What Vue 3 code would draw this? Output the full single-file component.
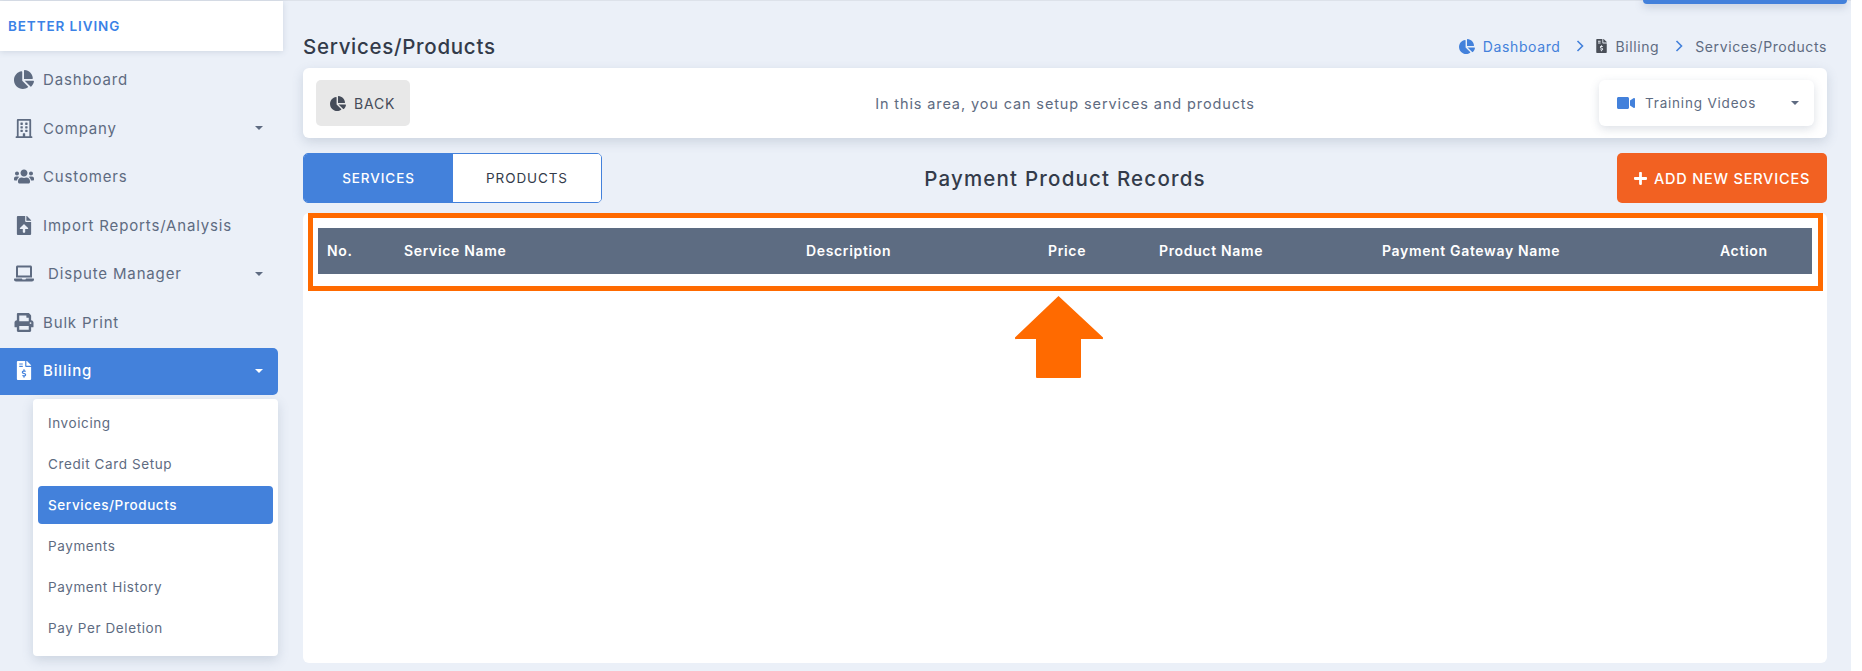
<template>
  <div class="page">
    <span class="top-btn"></span>

    <aside class="sidebar">
      <div class="logo">BETTER LIVING</div>
      <nav>
        <a
          v-for="item in nav"
          :key="item.label"
          class="nav-item"
          :class="{ active: item.active, wide: item.wide }"
        >
          <svg class="nav-icon" :viewBox="icons[item.icon].box" fill="currentColor">
            <path :d="icons[item.icon].d" />
          </svg>
          <span class="nav-label">{{ item.label }}</span>
          <i v-if="item.caret" class="caret"></i>
        </a>
      </nav>
      <ul class="submenu">
        <li v-for="s in billing" :key="s" :class="{ current: s === 'Services/Products' }">{{ s }}</li>
      </ul>
    </aside>

    <main class="main">
      <div class="head">
        <h1>Services/Products</h1>
        <div class="crumbs">
          <svg class="crumb-icon blue" :viewBox="icons.pie.box" fill="currentColor"><path :d="icons.pie.d" /></svg>
          <a>Dashboard</a>
          <svg class="chev" viewBox="0 0 8 12"><path d="M1.5 1l5 5-5 5" /></svg>
          <svg class="crumb-icon small" :viewBox="icons.invoice.box" fill="currentColor"><path :d="icons.invoice.d" /></svg>
          <span>Billing</span>
          <svg class="chev" viewBox="0 0 8 12"><path d="M1.5 1l5 5-5 5" /></svg>
          <span>Services/Products</span>
        </div>
      </div>

      <section class="info-card">
        <div>
          <button class="back">
            <svg :viewBox="icons.pie.box" fill="currentColor"><path :d="icons.pie.d" /></svg>
            BACK
          </button>
        </div>
        <p>In this area, you can setup services and products</p>
        <div class="info-right">
          <div class="videos">
            <svg :viewBox="icons.video.box" fill="currentColor"><path :d="icons.video.d" /></svg>
            <span>Training Videos</span>
            <i class="caret"></i>
          </div>
        </div>
      </section>

      <div class="toolbar">
        <div class="tabs">
          <button class="tab on">SERVICES</button>
          <button class="tab">PRODUCTS</button>
        </div>
        <h2>Payment Product Records</h2>
        <div class="toolbar-right">
          <button class="add">
            <svg :viewBox="icons.plus.box" fill="currentColor"><path :d="icons.plus.d" /></svg>
            ADD NEW SERVICES
          </button>
        </div>
      </div>

      <section class="table-card">
        <table>
          <colgroup>
            <col v-for="c in columns" :key="c.name" :style="{ width: c.width + 'px' }" />
          </colgroup>
          <thead>
            <tr>
              <th v-for="c in columns" :key="c.name">{{ c.name }}</th>
            </tr>
          </thead>
        </table>
        <div class="highlight"></div>
        <svg class="arrow" viewBox="0 0 88 82" fill="#ff6a00">
          <path d="M43.5 0 87.5 41a1 1 0 0 1-1 2H66v38a1 1 0 0 1-1 1H22a1 1 0 0 1-1-1V43H1.5a1 1 0 0 1-1-2z" />
        </svg>
      </section>
    </main>
  </div>
</template>

<script setup>
const icons = {
  pie: {
    box: '0 0 544 512',
    d: 'M527.79 288H290.5l158.03 158.03c6.04 6.04 15.98 6.53 22.19 .68 38.7-36.46 65.32-85.61 73.13-140.86 1.34-9.46-6.51-17.85-16.06-17.85zm-15.83-64.8C503.72 103.74 408.26 8.28 288.8 .04 279.68-.59 272 7.1 272 16.24V240h223.77c9.14 0 16.82-7.68 16.19-16.8zM224 288V50.71c0-9.55-8.39-17.4-17.84-16.06C86.99 51.49-4.1 155.6 .14 280.37 4.5 408.51 114.83 513.59 243.03 511.98c50.4-.63 96.97-16.87 135.26-44.03 7.9-5.6 8.42-17.23 1.57-24.08L224 288z',
  },
  building: {
    box: '0 0 448 512',
    d: 'M128 148v-40c0-6.6 5.4-12 12-12h40c6.6 0 12 5.4 12 12v40c0 6.6-5.4 12-12 12h-40c-6.6 0-12-5.4-12-12zm140 12h40c6.6 0 12-5.4 12-12v-40c0-6.6-5.4-12-12-12h-40c-6.6 0-12 5.4-12 12v40c0 6.6 5.4 12 12 12zm-128 96h40c6.6 0 12-5.4 12-12v-40c0-6.6-5.4-12-12-12h-40c-6.6 0-12 5.4-12 12v40c0 6.6 5.4 12 12 12zm128 0h40c6.6 0 12-5.4 12-12v-40c0-6.6-5.4-12-12-12h-40c-6.6 0-12 5.4-12 12v40c0 6.6 5.4 12 12 12zm-76 84v-40c0-6.6-5.4-12-12-12h-40c-6.6 0-12 5.4-12 12v40c0 6.6 5.4 12 12 12h40c6.6 0 12-5.4 12-12zm76 12h40c6.6 0 12-5.4 12-12v-40c0-6.6-5.4-12-12-12h-40c-6.6 0-12 5.4-12 12v40c0 6.6 5.4 12 12 12zm180 124v36H0v-36c0-6.6 5.4-12 12-12h19.5V24c0-13.3 10.7-24 24-24h337c13.3 0 24 10.7 24 24v440H436c6.6 0 12 5.4 12 12zM79.5 463H192v-67c0-6.6 5.4-12 12-12h40c6.6 0 12 5.4 12 12v67h112.5V49L80 48l-.5 415z',
  },
  users: {
    box: '0 0 640 512',
    d: 'M96 224c35.3 0 64-28.7 64-64s-28.7-64-64-64-64 28.7-64 64 28.7 64 64 64zm448 0c35.3 0 64-28.7 64-64s-28.7-64-64-64-64 28.7-64 64 28.7 64 64 64zm32 32h-64c-17.6 0-33.5 7.1-45.1 18.6 40.3 22.1 68.9 62 75.1 109.4h66c17.7 0 32-14.3 32-32v-32c0-35.3-28.7-64-64-64zm-256 0c61.9 0 112-50.1 112-112S381.9 32 320 32 208 82.1 208 144s50.1 112 112 112zm76.8 32h-8.3c-20.8 10-43.9 16-68.5 16s-47.6-6-68.5-16h-8.3C179.6 288 128 339.6 128 403.2V432c0 26.5 21.5 48 48 48h288c26.5 0 48-21.5 48-48v-28.8c0-63.6-51.6-115.2-115.2-115.2zm-223.7-13.4C161.5 263.1 145.6 256 128 256H64c-35.3 0-64 28.7-64 64v32c0 17.7 14.3 32 32 32h65.9c6.3-47.4 34.9-87.3 75.2-109.4z',
  },
  upload: {
    box: '0 0 384 512',
    d: 'M224 136V0H24C10.7 0 0 10.7 0 24v464c0 13.3 10.7 24 24 24h336c13.3 0 24-10.7 24-24V160H248c-13.2 0-24-10.8-24-24zm65.18 216.01H224v80c0 8.84-7.16 16-16 16h-32c-8.84 0-16-7.16-16-16v-80H94.82c-14.28 0-21.41-17.29-11.27-27.36l96.42-95.7c6.65-6.61 17.39-6.61 24.04 0l96.42 95.7c10.15 10.07 3.03 27.36-11.25 27.36zM377 105L279.1 7c-4.5-4.5-10.6-7-17-7H256v128h128v-6.1c0-6.3-2.5-12.4-7-16.9z',
  },
  laptop: {
    box: '0 0 640 512',
    d: 'M624 416H381.54c-.74 19.81-14.71 32-32.74 32H288c-18.69 0-33.02-17.47-32.77-32H16c-8.8 0-16 7.2-16 16v16c0 35.2 28.8 64 64 64h512c35.2 0 64-28.8 64-64v-16c0-8.8-7.2-16-16-16zM576 48c0-26.4-21.6-48-48-48H112C85.6 0 64 21.6 64 48v336h512V48zm-64 272H128V64h384v256z',
  },
  print: {
    box: '0 0 512 512',
    d: 'M448 192V77.25c0-8.49-3.37-16.62-9.37-22.63L393.37 9.37c-6-6-14.14-9.37-22.63-9.37H96C78.33 0 64 14.33 64 32v160c-35.35 0-64 28.65-64 64v112c0 8.84 7.16 16 16 16h48v96c0 17.67 14.33 32 32 32h320c17.67 0 32-14.33 32-32v-96h48c8.84 0 16-7.16 16-16V256c0-35.35-28.65-64-64-64zm-64 256H128v-96h256v96zm0-224H128V64h192v48c0 8.84 7.16 16 16 16h48v96zm48 72c-13.25 0-24-10.75-24-24 0-13.26 10.75-24 24-24s24 10.74 24 24c0 13.25-10.75 24-24 24z',
  },
  invoice: {
    box: '0 0 384 512',
    d: 'M377 105L279.1 7c-4.5-4.5-10.6-7-17-7H256v128h128v-6.1c0-6.3-2.5-12.4-7-16.9zm-153 31V0H24C10.7 0 0 10.7 0 24v464c0 13.3 10.7 24 24 24h336c13.3 0 24-10.7 24-24V160H248c-13.2 0-24-10.8-24-24zM64 72c0-4.42 3.58-8 8-8h80c4.42 0 8 3.58 8 8v16c0 4.42-3.58 8-8 8H72c-4.42 0-8-3.58-8-8V72zm0 80v-16c0-4.42 3.58-8 8-8h80c4.42 0 8 3.58 8 8v16c0 4.42-3.58 8-8 8H72c-4.42 0-8-3.58-8-8zm144 263.88V440c0 4.42-3.58 8-8 8h-16c-4.42 0-8-3.58-8-8v-24.29c-11.29-.58-22.27-4.52-31.37-11.35-3.9-2.93-4.1-8.77-.57-12.14l11.75-11.21c2.77-2.64 6.89-2.76 10.13-.73 3.87 2.42 8.26 3.72 12.82 3.72h28.11c6.5 0 11.8-5.92 11.8-13.19 0-5.95-3.61-11.19-8.77-12.73l-45-13.5c-18.59-5.58-31.58-23.42-31.58-43.39 0-24.52 19.05-44.44 42.67-45.07V232c0-4.42 3.58-8 8-8h16c4.42 0 8 3.58 8 8v24.29c11.29.58 22.27 4.51 31.37 11.35 3.9 2.93 4.1 8.77.57 12.14l-11.75 11.21c-2.77 2.64-6.89 2.76-10.13.73-3.87-2.43-8.26-3.72-12.82-3.72h-28.11c-6.5 0-11.8 5.92-11.8 13.19 0 5.95 3.61 11.19 8.77 12.73l45 13.5c18.59 5.58 31.58 23.42 31.58 43.39 0 24.53-19.05 44.44-42.67 45.07z',
  },
  video: {
    box: '0 0 576 512',
    d: 'M336.2 64H47.8C21.4 64 0 85.4 0 111.8v288.4C0 426.6 21.4 448 47.8 448h288.4c26.4 0 47.8-21.4 47.8-47.8V111.8c0-26.4-21.4-47.8-47.8-47.8zm189.4 37.7L416 177.3v157.4l109.6 75.5c21.2 14.6 50.4-.3 50.4-25.8V127.5c0-25.4-29.1-40.4-50.4-25.8z',
  },
  plus: {
    box: '0 0 448 512',
    d: 'M416 208H272V64c0-17.67-14.33-32-32-32h-32c-17.67 0-32 14.33-32 32v144H32c-17.67 0-32 14.33-32 32v32c0 17.67 14.33 32 32 32h144v144c0 17.67 14.33 32 32 32h32c17.67 0 32-14.33 32-32V304h144c17.67 0 32-14.33 32-32v-32c0-17.67-14.33-32-32-32z',
  },
}

const nav = [
  { label: 'Dashboard', icon: 'pie' },
  { label: 'Company', icon: 'building', caret: true },
  { label: 'Customers', icon: 'users' },
  { label: 'Import Reports/Analysis', icon: 'upload' },
  { label: 'Dispute Manager', icon: 'laptop', caret: true, wide: true },
  { label: 'Bulk Print', icon: 'print' },
  { label: 'Billing', icon: 'invoice', caret: true, active: true },
]

const billing = [
  'Invoicing',
  'Credit Card Setup',
  'Services/Products',
  'Payments',
  'Payment History',
  'Pay Per Deletion',
]

const columns = [
  { name: 'No.', width: 77 },
  { name: 'Service Name', width: 402 },
  { name: 'Description', width: 242 },
  { name: 'Price', width: 111 },
  { name: 'Product Name', width: 223 },
  { name: 'Payment Gateway Name', width: 338 },
  { name: 'Action', width: 101 },
]
</script>

<style>
body {
  background: #fff;
}
</style>

<style scoped>
.page {
  position: relative;
  display: flex;
  width: 1851px;
  height: 671px;
  overflow: hidden;
  padding-top: 1px;
  background: #ebf0f8;
  box-shadow: inset 0 1px #dde2ea;
  box-sizing: border-box;
  font-family: Inter, "Open Sans", sans-serif;
  color: #5e6b81;
}
.top-btn {
  position: absolute;
  top: -4px;
  left: 1643px;
  width: 204px;
  height: 8px;
  border-radius: 4px;
  background: #4381db;
  box-shadow: 0 3px 8px rgba(80, 100, 130, 0.25);
}

.sidebar {
  flex: 0 0 283px;
}
.logo {
  height: 50px;
  padding-left: 8px;
  background: #fff;
  color: #3b82e6;
  font-size: 13.5px;
  font-weight: 600;
  line-height: 50px;
  letter-spacing: 0.9px;
  box-shadow: 0 1px 6px rgba(80, 100, 130, 0.18);
}
nav {
  margin-top: 5.5px;
}
.nav-item {
  display: flex;
  align-items: center;
  width: 278px;
  height: 47px;
  margin-bottom: 1.5px;
  box-sizing: border-box;
  padding: 0 15px 1px 14px;
  border-radius: 0 5px 5px 0;
  font-size: 15px;
  letter-spacing: 0.85px;
}
.nav-icon {
  flex: 0 0 20px;
  width: 20px;
  height: 19px;
  margin-right: 9px;
}
.nav-item.wide .nav-label {
  margin-left: 5px;
}
.nav-item.active {
  background: #4381db;
  color: #fff;
  font-weight: 500;
}
.caret {
  display: block;
  width: 0;
  height: 0;
  margin-left: auto;
  border-left: 4.5px solid transparent;
  border-right: 4.5px solid transparent;
  border-top: 4.5px solid currentColor;
}
.submenu {
  width: 245px;
  margin: 4px 0 0 33px;
  padding: 5px 5px 9px;
  box-sizing: border-box;
  list-style: none;
  border-radius: 4px;
  background: #fff;
  box-shadow: 0 4px 12px rgba(80, 100, 130, 0.2);
}
.submenu li {
  height: 38px;
  margin-bottom: 3.2px;
  padding-left: 10px;
  border-radius: 4px;
  font-size: 13.5px;
  line-height: 38px;
  letter-spacing: 0.6px;
}
.submenu li:last-child {
  margin-bottom: 0;
}
.submenu li.current {
  background: #4381db;
  color: #fff;
  font-weight: 500;
}

.main {
  flex: 1;
  min-width: 0;
  padding: 26px 24px 0 20px;
}
.head {
  display: flex;
  align-items: center;
  justify-content: space-between;
  height: 38px;
  margin-bottom: 3px;
}
h1 {
  margin: 0;
  color: #333b4a;
  font-size: 20.5px;
  font-weight: 500;
  letter-spacing: 0.7px;
}
.crumbs {
  display: flex;
  align-items: center;
  font-size: 14px;
  letter-spacing: 0.6px;
}
.crumbs a {
  color: #4381db;
}
.crumb-icon {
  width: 16px;
  height: 15px;
  margin-right: 8px;
}
.crumb-icon.blue {
  color: #4381db;
}
.crumb-icon.small {
  width: 11px;
  height: 14px;
  color: #4a4f58;
}
.chev {
  width: 8px;
  height: 12px;
  margin: 0 12px 0 16px;
  fill: none;
  stroke: #4381db;
  stroke-width: 1.6;
}

.info-card {
  display: grid;
  grid-template-columns: 1fr auto 1fr;
  align-items: center;
  height: 70px;
  padding: 0 13px;
  box-sizing: border-box;
  border-radius: 6px;
  background: #fff;
  box-shadow: 0 4px 12px rgba(80, 100, 130, 0.2);
}
.info-card p {
  margin: 0;
  font-size: 14.5px;
  letter-spacing: 0.88px;
}
.info-right {
  display: flex;
  justify-content: flex-end;
}
.back {
  display: flex;
  align-items: center;
  gap: 8px;
  width: 94px;
  height: 46px;
  padding: 0 0 0 14px;
  border: 0;
  border-radius: 5px;
  background: #e8e8e8;
  color: #454c59;
  font-family: inherit;
  font-size: 14px;
  letter-spacing: 0.8px;
}
.back svg {
  width: 16px;
  height: 15px;
}
.videos {
  display: flex;
  align-items: center;
  width: 215px;
  height: 46px;
  padding: 0 15px 0 18px;
  box-sizing: border-box;
  border-radius: 6px;
  background: #fff;
  font-size: 13.5px;
  letter-spacing: 0.8px;
  box-shadow: 0 3px 10px rgba(80, 100, 130, 0.2);
}
.videos svg {
  width: 18px;
  height: 16px;
  margin-right: 10px;
  color: #4381db;
}

.toolbar {
  display: grid;
  grid-template-columns: 1fr auto 1fr;
  align-items: center;
  height: 50px;
  margin: 15px 0 10px;
}
.tabs {
  display: flex;
  width: 299px;
  height: 50px;
  box-sizing: border-box;
  overflow: hidden;
  border: 1px solid #4381db;
  border-radius: 5px;
}
.tab {
  flex: 1;
  padding: 0;
  border: 0;
  background: #fff;
  color: #333b4a;
  font-family: inherit;
  font-size: 13.5px;
  letter-spacing: 0.9px;
}
.tab.on {
  flex: 0 0 149px;
  background: #4381db;
  color: #fff;
  font-weight: 500;
}
h2 {
  margin: 0;
  color: #333b4a;
  font-size: 20.5px;
  font-weight: 500;
  letter-spacing: 1.2px;
}
.toolbar-right {
  display: flex;
  justify-content: flex-end;
}
.add {
  display: flex;
  align-items: center;
  justify-content: center;
  gap: 7px;
  width: 210px;
  height: 50px;
  padding: 0;
  border: 0;
  border-radius: 5px;
  background: #f26122;
  color: #fff;
  font-family: inherit;
  font-size: 14.5px;
  font-weight: 500;
  letter-spacing: 0.8px;
}
.add svg {
  width: 13px;
  height: 15px;
}

.table-card {
  position: relative;
  height: 450px;
  padding: 15px;
  box-sizing: border-box;
  border-radius: 6px;
  background: #fff;
}
table {
  width: 1494px;
  table-layout: fixed;
  border-collapse: collapse;
}
th {
  height: 46px;
  padding: 0 9px 2px;
  box-sizing: border-box;
  background: #5d6c82;
  color: #fff;
  font-size: 14px;
  font-weight: 600;
  text-align: left;
  white-space: nowrap;
  letter-spacing: 0.65px;
}
.highlight {
  position: absolute;
  top: 0;
  left: 5px;
  right: 4px;
  height: 78px;
  box-sizing: border-box;
  border: 5px solid #ff6a00;
}
.arrow {
  position: absolute;
  top: 83px;
  left: 712px;
  width: 88px;
  height: 82px;
}
</style>
